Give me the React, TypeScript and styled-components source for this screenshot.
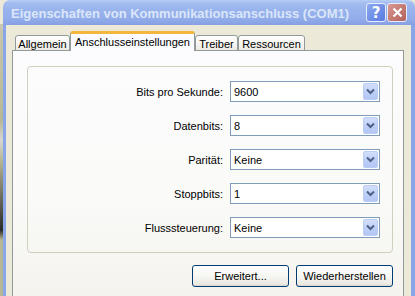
import React from 'react';
import styled, { createGlobalStyle } from 'styled-components';

const GlobalStyle = createGlobalStyle`
  html, body {
    margin: 0;
    padding: 0;
    overflow: hidden;
  }
  body {
    font-family: "Liberation Sans", Arial, sans-serif;
    font-size: 11px;
    color: #000;
  }
`;

const Screen = styled.div`
  display: flex;
  width: 415px;
  height: 296px;
  overflow: hidden;
  background: #ece9d8;
`;

const BehindStrip = styled.div`
  width: 3px;
  flex: none;
  background: linear-gradient(
    to bottom,
    #ece9d8 0px,
    #ece9d8 24px,
    #c9c7ad 24px,
    #b8b795 120px,
    #d6d6d2 140px,
    #b8b795 160px,
    #2a2a2a 230px,
    #b8b795 240px
  );
`;

const Window = styled.div`
  flex: 1;
  display: flex;
  flex-direction: column;
  min-width: 0;
`;

const TitleBar = styled.div`
  height: 25px;
  flex: none;
  display: flex;
  align-items: center;
  padding: 0 8px 0 8px;
  border-top-left-radius: 7px;
  border-top-right-radius: 7px;
  background: linear-gradient(
    to bottom,
    #b7cdf6 0%,
    #a3bdf0 12%,
    #98b3ec 40%,
    #92adea 75%,
    #869fe3 100%
  );
`;

const TitleText = styled.div`
  flex: 1;
  min-width: 0;
  font-family: "Liberation Sans", Arial, sans-serif;
  font-weight: bold;
  font-size: 13px;
  color: #dbe6f9;
  white-space: nowrap;
  overflow: hidden;
  padding-top: 1px;
`;

const CaptionButton = styled.div<{ $variant: 'help' | 'close' }>`
  width: 20px;
  height: 19px;
  flex: none;
  box-sizing: border-box;
  margin-left: 1px;
  border: 1px solid #e6ecfb;
  border-radius: 3px;
  display: flex;
  align-items: center;
  justify-content: center;
  color: #fff;
  font-family: "DejaVu Sans", sans-serif;
  font-weight: bold;
  font-size: 15px;
  background: ${(p) =>
    p.$variant === 'help'
      ? 'linear-gradient(135deg, #8faaf0 0%, #6b8ce6 60%, #5a7bdc 100%)'
      : 'linear-gradient(135deg, #d99a94 0%, #c2766f 60%, #b0635d 100%)'};
`;

const Frame = styled.div`
  flex: 1;
  display: flex;
  border-left: 3px solid #8aa5e8;
  border-right: 4px solid #8aa5e8;
  background: #ece9d8;
  padding: 7px 7px 0 6px;
  flex-direction: column;
  min-height: 0;
`;

const TabStrip = styled.div`
  display: flex;
  align-items: flex-end;
  padding-left: 3px;
  height: 19px;
  position: relative;
  z-index: 1;
  margin-bottom: -1px;
`;

const Tab = styled.div<{ $width: number; $active?: boolean }>`
  width: ${(p) => p.$width}px;
  box-sizing: border-box;
  height: ${(p) => (p.$active ? 20 : 16)}px;
  border: 1px solid #919b9c;
  border-bottom: ${(p) => (p.$active ? 'none' : '1px solid #919b9c')};
  border-top: ${(p) => (p.$active ? '3px solid #f5b63d' : '1px solid #919b9c')};
  border-radius: 3px 3px 0 0;
  background: ${(p) =>
    p.$active ? '#fcfcfe' : 'linear-gradient(to bottom, #ffffff, #f3f2ec 70%, #eceae2)'};
  display: flex;
  align-items: center;
  justify-content: center;
  padding-top: ${(p) => (p.$active ? 0 : 1)}px;
  padding-bottom: ${(p) => (p.$active ? 2 : 0)}px;
  white-space: nowrap;
`;

const TabPanel = styled.div`
  flex: 1;
  border: 1px solid #919b9c;
  border-bottom: none;
  background: linear-gradient(to bottom, #fcfcfe 0%, #fafaf8 60%, #f4f3ee 100%);
  padding: 15px 10px 0 14px;
  display: flex;
  flex-direction: column;
`;

const GroupBox = styled.div`
  border: 1px solid #d0d0bf;
  border-radius: 4px;
  padding: 14px 12px 14px 0;
  display: grid;
  grid-template-columns: 1fr 150px;
  column-gap: 7px;
  row-gap: 13px;
  grid-auto-rows: 21px;
`;

const FieldLabel = styled.label`
  justify-self: end;
  align-self: center;
  white-space: nowrap;
`;

const Combo = styled.div`
  box-sizing: border-box;
  height: 21px;
  border: 1px solid #7f9db9;
  background: #fff;
  display: flex;
  align-items: stretch;
  padding: 1px;
`;

const ComboValue = styled.div`
  flex: 1;
  display: flex;
  align-items: center;
  padding-left: 2px;
`;

const ComboButton = styled.div`
  width: 15px;
  box-sizing: border-box;
  border: 1px solid #bccdf3;
  border-radius: 2px;
  background: linear-gradient(to bottom, #d3defb 0%, #bfd0f8 50%, #b3c6f5 100%);
  display: flex;
  align-items: center;
  justify-content: center;
`;

const ButtonRow = styled.div`
  display: flex;
  justify-content: flex-end;
  gap: 7px;
  margin-top: 12px;
`;

const PushButton = styled.button`
  width: 97px;
  height: 22px;
  border: 1px solid #003c74;
  border-radius: 3px;
  background: linear-gradient(to bottom, #ffffff 0%, #f6f6f3 50%, #eae9e3 90%, #d8d5cb 100%);
  font-family: "Liberation Sans", Arial, sans-serif;
  font-size: 11px;
  color: #000;
  padding: 0;
`;

const Chevron = () => (
  <svg width="9" height="7" viewBox="0 0 9 7">
    <path d="M1 1.5 L4.5 5 L8 1.5" fill="none" stroke="#4d6185" strokeWidth="2" />
  </svg>
);

const fields = [
  { label: 'Bits pro Sekunde:', value: '9600' },
  { label: 'Datenbits:', value: '8' },
  { label: 'Parität:', value: 'Keine' },
  { label: 'Stoppbits:', value: '1' },
  { label: 'Flusssteuerung:', value: 'Keine' },
];

const tabs = [
  { name: 'Allgemein', width: 55 },
  { name: 'Anschlusseinstellungen', width: 125, active: true },
  { name: 'Treiber', width: 43 },
  { name: 'Ressourcen', width: 67 },
];

export default function App() {
  return (
    <Screen>
      <GlobalStyle />
      <BehindStrip />
      <Window>
        <TitleBar>
          <TitleText>Eigenschaften von Kommunikationsanschluss (COM1)</TitleText>
          <CaptionButton $variant="help">?</CaptionButton>
          <CaptionButton $variant="close">
            <svg width="11" height="11" viewBox="0 0 11 11">
              <path d="M1.5 1.5 L9.5 9.5 M9.5 1.5 L1.5 9.5" stroke="#fff" strokeWidth="2.2" />
            </svg>
          </CaptionButton>
        </TitleBar>
        <Frame>
          <TabStrip>
            {tabs.map((t) => (
              <Tab key={t.name} $width={t.width} $active={t.active}>
                {t.name}
              </Tab>
            ))}
          </TabStrip>
          <TabPanel>
            <GroupBox>
              {fields.map((f) => (
                <React.Fragment key={f.label}>
                  <FieldLabel>{f.label}</FieldLabel>
                  <Combo>
                    <ComboValue>{f.value}</ComboValue>
                    <ComboButton>
                      <Chevron />
                    </ComboButton>
                  </Combo>
                </React.Fragment>
              ))}
            </GroupBox>
            <ButtonRow>
              <PushButton>Erweitert...</PushButton>
              <PushButton>Wiederherstellen</PushButton>
            </ButtonRow>
          </TabPanel>
        </Frame>
      </Window>
    </Screen>
  );
}
